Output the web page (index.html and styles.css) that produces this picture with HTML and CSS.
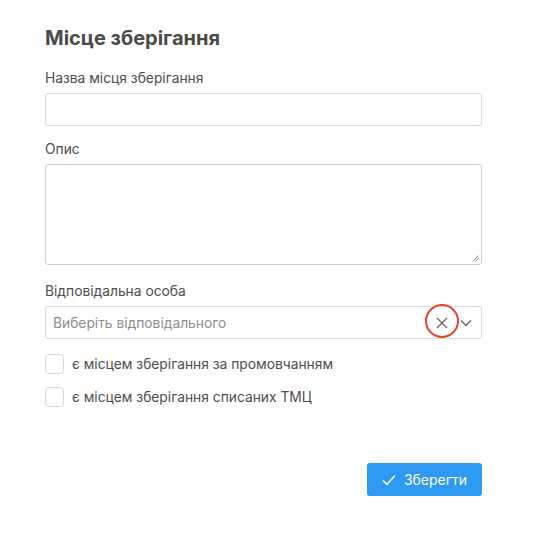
FILE: index.html
```html
<!DOCTYPE html>
<html lang="uk">
<head>
<meta charset="utf-8">
<link rel="stylesheet" href="styles.css">
</head>
<body>
<div class="form">
  <h1 class="title">Місце зберігання</h1>
  <div class="field">
    <label class="label">Назва місця зберігання</label>
    <div class="input"></div>
  </div>
  <div class="field">
    <label class="label">Опис</label>
    <div class="textarea">
      <svg class="resize" width="8" height="8" viewBox="0 0 8 8"><path d="M7.5 1.5 L1.5 7.5 M7.5 4.5 L4.5 7.5" stroke="#888" stroke-width="0.9" fill="none"/></svg>
    </div>
  </div>
  <div class="field field-select">
    <label class="label">Відповідальна особа</label>
    <div class="select">
      <span class="placeholder">Виберіть відповідального</span>
      <span class="icons">
        <span class="clear">
          <svg width="12" height="12" viewBox="0 0 12 12"><path d="M1 1 L11 11 M11 1 L1 11" stroke="#666" stroke-width="1.3" fill="none"/></svg>
          <span class="ring"></span>
        </span>
        <svg class="chev" width="12" height="8" viewBox="0 0 12 8"><path d="M1 1.5 L6 6.5 L11 1.5" stroke="#666" stroke-width="1.3" fill="none"/></svg>
      </span>
    </div>
  </div>
  <div class="check-row"><span class="box"></span><span class="check-text">є місцем зберігання за промовчанням</span></div>
  <div class="check-row"><span class="box"></span><span class="check-text">є місцем зберігання списаних ТМЦ</span></div>
  <div class="actions">
    <button class="btn">
      <svg width="14" height="12" viewBox="0 0 14 12"><path d="M1 6.5 L5 10.5 L13 1.5" stroke="#fff" stroke-width="1.5" fill="none"/></svg>
      <span>Зберегти</span>
    </button>
  </div>
</div>
</body>
</html>
```
FILE: styles.css
```css
* { box-sizing: border-box; }
html, body { margin: 0; padding: 0; background: #fff; }
body {
  font-family: Inter, "Noto Sans", "Liberation Sans", sans-serif;
  color: #4d4d4d;
  font-size: 13.8px;
}
.form {
  width: 437px;
  margin-left: 45px;
  padding-top: 26px;
}
.title {
  margin: 0 0 18px 0;
  font-size: 20px;
  line-height: 24px;
  font-weight: 700;
  color: #4a4a4a;
}
.field { margin-bottom: 13px; }
.label {
  display: block;
  line-height: 20px;
  margin-bottom: 5px;
  color: #4d4d4d;
}
.input {
  height: 33px;
  border: 1px solid #d9d9d9;
  border-radius: 3px;
}
.textarea {
  height: 101px;
  border: 1px solid #d0d0d0;
  border-radius: 3px;
  position: relative;
}
.field + .field-select { margin-top: 16px; }
.resize { position: absolute; right: 2px; bottom: 2px; }
.select {
  height: 33px;
  border: 1px solid #d9d9d9;
  border-radius: 3px;
  display: flex;
  align-items: center;
  justify-content: space-between;
  padding: 0 9px 0 7px;
}
.placeholder { color: #8e8e8e; }
.icons { display: flex; align-items: center; gap: 12px; }
.clear { position: relative; width: 12px; height: 12px; display: flex; }
.ring {
  position: absolute;
  left: -11px;
  top: -13px;
  width: 34px;
  height: 34px;
  border: 2.5px solid #e8442c;
  border-radius: 50%;
}
.chev { margin-top: 1px; }
.field.field-select { margin-bottom: 15px; }
.check-row {
  display: flex;
  align-items: center;
  height: 20px;
  margin-bottom: 13px;
}
.box {
  width: 19px;
  height: 20px;
  border: 1.5px solid #d6d6d6;
  border-radius: 4px;
  margin-right: 8px;
}
.check-text { color: #4d4d4d; }
.actions {
  display: flex;
  justify-content: flex-end;
  margin-top: 56px;
}
.btn {
  width: 115px;
  height: 33px;
  border: none;
  border-radius: 3px;
  background: #2d99f0;
  color: #fff;
  font-family: inherit;
  font-size: 14px;
  display: flex;
  align-items: center;
  justify-content: center;
  gap: 8px;
  padding: 0;
}
```
